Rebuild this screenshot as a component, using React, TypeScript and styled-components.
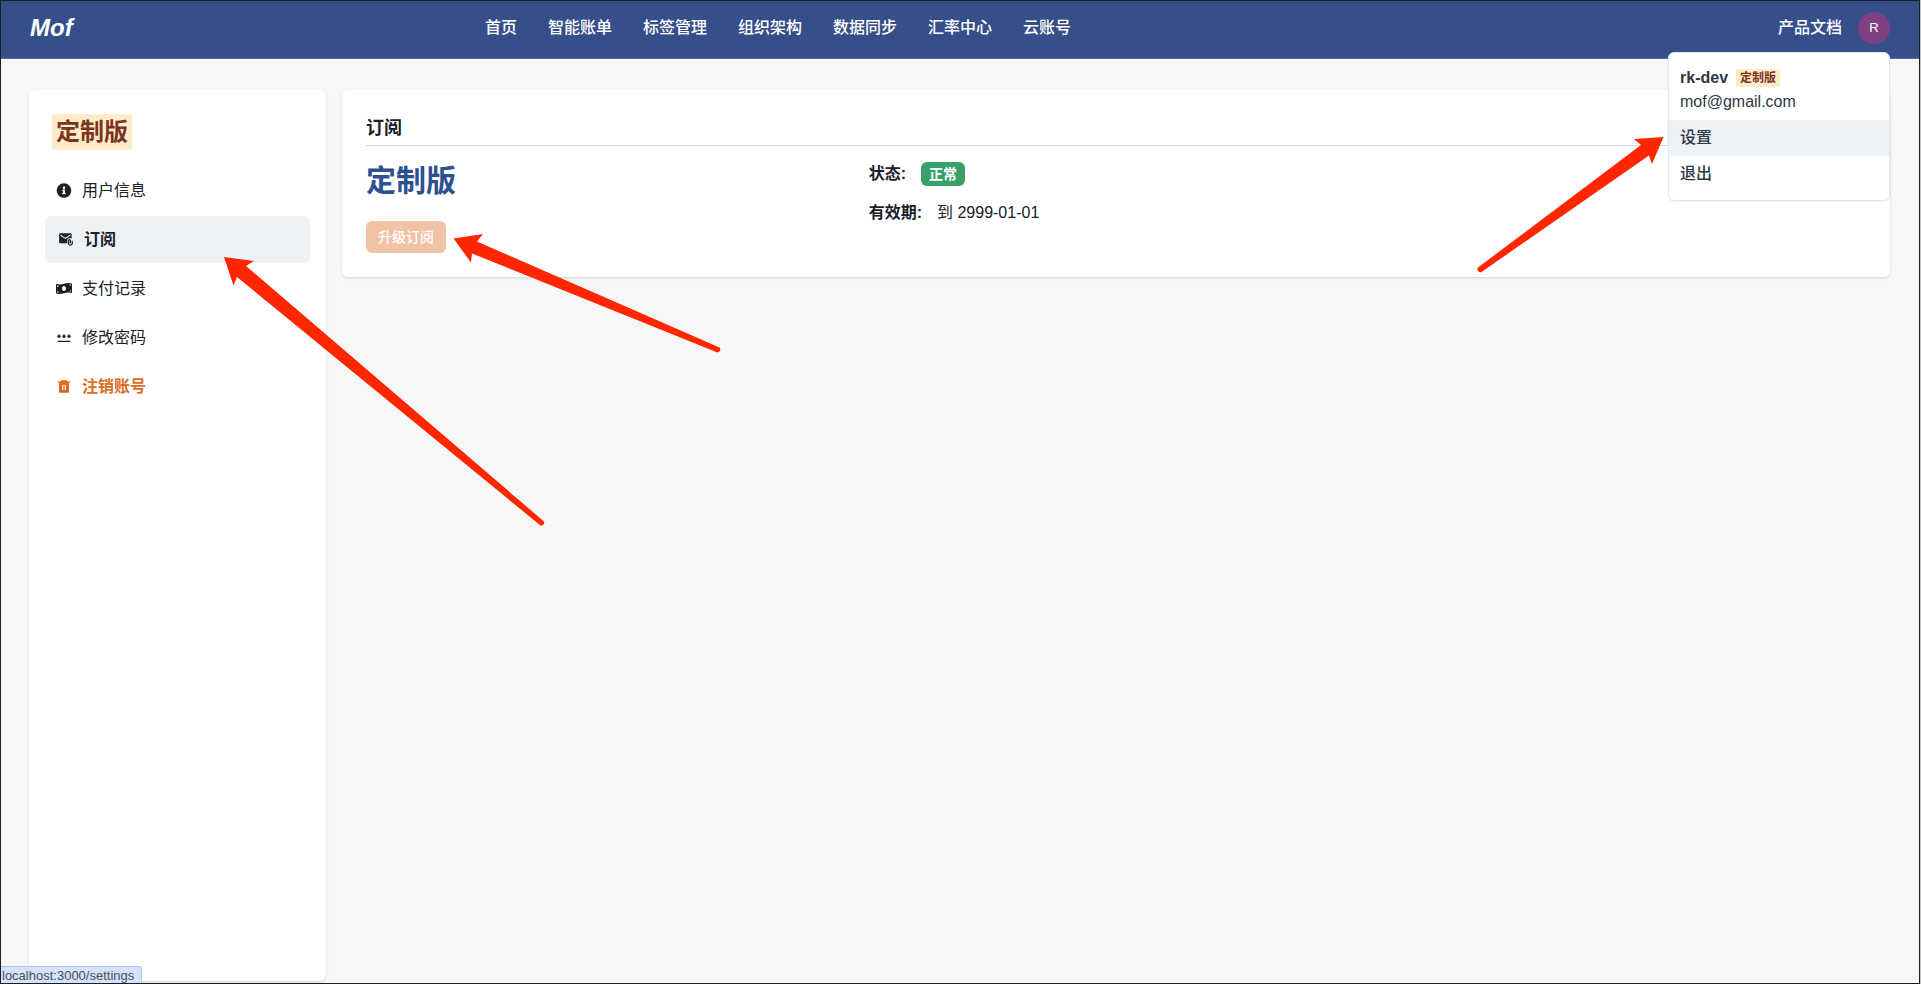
import React from "react";
import styled, { createGlobalStyle, css } from "styled-components";
import { FaInfoCircle, FaMoneyBillWave } from "react-icons/fa";
import { MdAttachEmail, MdPassword } from "react-icons/md";
import { RiDeleteBin6Fill } from "react-icons/ri";

const GlobalStyle = createGlobalStyle`
  *, *::before, *::after { box-sizing: border-box; }
  html { background: #c4c4c6; }
  body {
    margin: 0;
    color: #1a202c;
    font-family: "Liberation Sans", "Noto Sans CJK SC", sans-serif;
    font-size: 16px;
    line-height: 24px;
  }
  h1, h2, p, ul, dl, dd { margin: 0; padding: 0; }
  ul { list-style: none; }
  a { color: inherit; text-decoration: none; }
  button { font: inherit; border: 0; cursor: pointer; }
`;

const Frame = styled.div`
  position: relative;
  display: flex;
  flex-direction: column;
  min-height: 100vh;
  margin-right: 1px;
  background: #f7f7f7;
  border: 1px solid #1d1d22;
`;

const Header = styled.header`
  display: grid;
  grid-template-columns: 5fr auto 9fr;
  align-items: center;
  height: 58px;
  padding: 0 29px 4px;
  background: #364f8a;
  color: #fff;
  border-bottom: 1px solid #5a70a4;
`;

const Logo = styled.a`
  font-size: 24px;
  font-weight: 700;
  font-style: italic;
`;

const Nav = styled.nav`
  display: flex;
  gap: 31px;
  font-weight: 500;
`;

const Account = styled.div`
  position: relative;
  display: flex;
  justify-content: flex-end;
  align-items: center;
  gap: 16px;
  font-weight: 500;
`;

const Avatar = styled.button`
  width: 32px;
  height: 32px;
  padding: 0;
  border-radius: 50%;
  background: #7f4083;
  color: #fff;
  font-size: 13px;
`;

const Menu = styled.div`
  position: absolute;
  z-index: 2;
  top: 40px;
  right: 0;
  width: 222px;
  padding: 13px 0 8px;
  background: #fff;
  color: #2d3748;
  border: 1px solid #e2e8f0;
  border-radius: 6px;
  box-shadow: 0 1px 2px rgba(0, 0, 0, 0.06);
`;

const MenuProfile = styled.div`
  padding: 0 11px 6px;
  font-weight: 400;
`;

const MenuName = styled.div`
  display: flex;
  align-items: center;
  gap: 8px;
  font-weight: 700;
`;

const MenuItem = styled.a<{ $active?: boolean }>`
  display: block;
  padding: 6px 11px;
  background: ${(p) => (p.$active ? "#edf2f7" : "transparent")};
`;

const Tag = styled.span<{ $large?: boolean }>`
  display: inline-block;
  padding: 0 4px;
  border-radius: 2px;
  background: #feebc8;
  color: #7b341e;
  font-weight: 700;
  font-size: ${(p) => (p.$large ? "24px" : "12px")};
  line-height: ${(p) => (p.$large ? "36px" : "18px")};
`;

const Main = styled.main`
  flex: 1;
  display: flex;
  gap: 16px;
  padding: 31px 29px 2px 28px;
`;

const card = css`
  background: #fff;
  border-radius: 6px;
  box-shadow: 0 1px 3px rgba(0, 0, 0, 0.1), 0 1px 2px rgba(0, 0, 0, 0.06);
`;

const Sidebar = styled.aside`
  ${card}
  flex: 0 0 297px;
  padding: 24px 16px;
`;

const Plan = styled.div`
  height: 36px;
  padding: 0 7px;
  margin-bottom: 17px;
`;

const SideList = styled.ul`
  display: flex;
  flex-direction: column;
  gap: 2px;
`;

const SideLink = styled.a<{ $active?: boolean; $danger?: boolean }>`
  display: flex;
  align-items: center;
  height: 47px;
  gap: 10px;
  padding: 0 ${(p) => (p.$active ? "13px" : "11px")};
  border-radius: 6px;
  background: ${(p) => (p.$active ? "#edf2f7" : "transparent")};
  color: ${(p) => (p.$danger ? "#dd6b20" : "#1a202c")};
  font-weight: ${(p) => (p.$active || p.$danger ? 700 : 400)};
  svg { width: 16px; height: 15px; }
`;

const Panel = styled.section`
  ${card}
  flex: 1;
  align-self: flex-start;
  padding: 24px;
`;

const PanelTitle = styled.h1`
  padding: 1px 0 4px;
  border-bottom: 1px solid #cbd5e0;
  font-size: 18px;
  font-weight: 700;
  line-height: 26px;
`;

const Columns = styled.div`
  display: grid;
  grid-template-columns: 1fr 2fr;
  column-gap: 4px;
  padding-top: 12px;
`;

const PlanName = styled.h2`
  margin-bottom: 17px;
  color: #2c5090;
  font-size: 30px;
  font-weight: 700;
  line-height: 46px;
`;

const UpgradeButton = styled.button`
  display: block;
  height: 32px;
  padding: 0 12px;
  border-radius: 6px;
  background: #dd6b20;
  color: #fff;
  font-size: 14px;
  font-weight: 500;
  line-height: 32px;
  opacity: 0.4;
`;

const Details = styled.dl`
  display: flex;
  flex-direction: column;
  gap: 15px;
  padding-top: 4px;
`;

const Detail = styled.div`
  display: flex;
  align-items: center;
  gap: 15px;
`;

const Term = styled.dt`
  font-weight: 700;
`;

const Status = styled.span`
  display: block;
  padding: 0 8px;
  border-radius: 6px;
  background: #38a169;
  color: #fff;
  font-size: 14px;
  font-weight: 700;
`;

const LinkHint = styled.div`
  position: absolute;
  left: 0;
  bottom: 0;
  height: 17px;
  padding: 0 7px 0 1px;
  border: 1px solid #b9c3d6;
  border-width: 1px 1px 0 0;
  border-radius: 0 4px 0 0;
  background: #d3e3fd;
  color: #4b4f55;
  font-size: 13px;
  line-height: 17px;
`;

const Arrows = styled.svg`
  position: absolute;
  z-index: 3;
  top: -1px;
  left: -1px;
  pointer-events: none;
`;

const navItems = ["首页", "智能账单", "标签管理", "组织架构", "数据同步", "汇率中心", "云账号"];

const sideItems = [
  { label: "用户信息", Icon: FaInfoCircle },
  { label: "订阅", Icon: MdAttachEmail, active: true },
  { label: "支付记录", Icon: FaMoneyBillWave },
  { label: "修改密码", Icon: MdPassword },
  { label: "注销账号", Icon: RiDeleteBin6Fill, danger: true },
];

export default function App() {
  return (
    <>
      <GlobalStyle />
      <Frame>
        <Header>
          <Logo href="#">Mof</Logo>
          <Nav>
            {navItems.map((item) => (
              <a href="#" key={item}>{item}</a>
            ))}
          </Nav>
          <Account>
            <a href="#">产品文档</a>
            <Avatar type="button" aria-haspopup="menu">R</Avatar>
            <Menu>
              <MenuProfile>
                <MenuName>rk-dev <Tag>定制版</Tag></MenuName>
                <p>mof@gmail.com</p>
              </MenuProfile>
              <MenuItem href="#" $active>设置</MenuItem>
              <MenuItem href="#">退出</MenuItem>
            </Menu>
          </Account>
        </Header>
        <Main>
          <Sidebar>
            <Plan><Tag $large>定制版</Tag></Plan>
            <SideList>
              {sideItems.map(({ label, Icon, active, danger }) => (
                <li key={label}>
                  <SideLink href="#" $active={active} $danger={danger}>
                    <Icon aria-hidden />
                    <span>{label}</span>
                  </SideLink>
                </li>
              ))}
            </SideList>
          </Sidebar>
          <Panel>
            <PanelTitle>订阅</PanelTitle>
            <Columns>
              <div>
                <PlanName>定制版</PlanName>
                <UpgradeButton type="button" disabled>升级订阅</UpgradeButton>
              </div>
              <Details>
                <Detail>
                  <Term>状态:</Term>
                  <dd><Status>正常</Status></dd>
                </Detail>
                <Detail>
                  <Term>有效期:</Term>
                  <dd>到 2999-01-01</dd>
                </Detail>
              </Details>
            </Columns>
          </Panel>
        </Main>
        <LinkHint>localhost:3000/settings</LinkHint>
        <Arrows width="1700" height="540" viewBox="0 0 1700 540" fill="#ff2600" aria-hidden>
          <path d="M224 257 L254 261 L246 266 L544 521.500 A3 3 0 0 1 540.500 525.500 L237 277 L233.500 285.500 Z" />
          <path d="M453.500 238.500 L483 234 L477 241.500 L719.500 347.500 A3 3 0 0 1 717.500 352.500 L472 253.500 L471 262.500 Z" />
          <path d="M1663.500 137 L1634 139 L1641 145 L1478 267.500 A3 3 0 0 0 1481.500 272 L1649 155.500 L1652 164 Z" />
        </Arrows>
      </Frame>
    </>
  );
}
